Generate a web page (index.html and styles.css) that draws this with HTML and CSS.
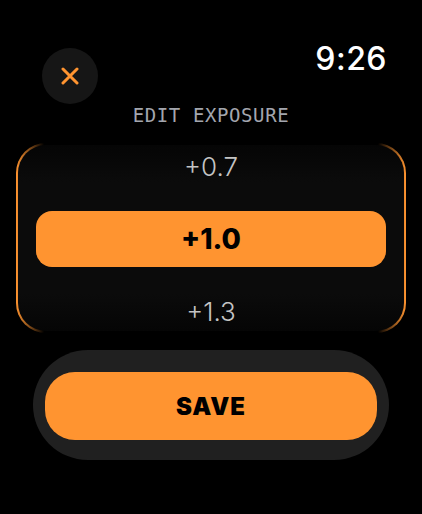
FILE: index.html
```html
<!DOCTYPE html>
<html lang="en">
<head>
  <meta charset="UTF-8" />
  <meta name="viewport" content="width=device-width, initial-scale=1.0" />
  <title>Edit Exposure</title>
  <link rel="stylesheet" href="styles.css">
</head>
<body>
  <div class="screen">
    <div class="top-bar">
      <button class="close-btn" aria-label="Close">
        <svg width="18" height="18" viewBox="0 0 18 18">
          <path d="M2 2 L16 16 M16 2 L2 16" stroke="#ff9430" stroke-width="3" stroke-linecap="round" fill="none" />
        </svg>
      </button>
      <div class="clock">9:26</div>
    </div>

    <div class="title">EDIT EXPOSURE</div>

    <div class="picker">
      <div class="picker-row">+0.7</div>
      <div class="picker-row selected">+1.0</div>
      <div class="picker-row">+1.3</div>
    </div>

    <div class="save-wrap">
      <button class="save-btn">SAVE</button>
    </div>
  </div>
</body>
</html>
```

FILE: styles.css
```css
body {
  margin: 0;
  background-color: #000;
  font-family: Inter, "Noto Sans", sans-serif;
  color: #fff;
}

.screen {
  width: 422px;
  height: 514px;
  box-sizing: border-box;
  padding: 38px 0 0;
}

.top-bar {
  display: flex;
  justify-content: space-between;
  align-items: flex-start;
  padding: 0 35px 0 42px;
}

.close-btn {
  width: 56px;
  height: 56px;
  margin-top: 10px;
  border: none;
  border-radius: 50%;
  background: #161616;
  display: flex;
  align-items: center;
  justify-content: center;
  padding: 0;
}

.clock {
  margin-top: 2px;
  font-size: 32px;
  font-weight: 500;
  line-height: 38px;
  letter-spacing: 0.5px;
}

.title {
  margin-top: -1px;
  text-align: center;
  font-family: "DejaVu Sans Mono", monospace;
  font-size: 19px;
  line-height: 24px;
  letter-spacing: 0.6px;
  color: #a3a6ae;
}

.picker {
  margin: 16px 16px 0;
  height: 190px;
  box-sizing: border-box;
  padding: 3px 18px 1px;
  border: 2px solid transparent;
  border-radius: 30px;
  background:
    linear-gradient(to bottom, #050505, #0b0b0b 20%, #0b0b0b 80%, #050505) padding-box,
    linear-gradient(to right, #ff9430 0, rgba(255, 148, 48, 0) 28px, rgba(255, 148, 48, 0) calc(100% - 28px), #ff9430 100%) border-box;
  display: flex;
  flex-direction: column;
  gap: 26px;
}

.picker-row {
  height: 37px;
  display: flex;
  align-items: center;
  justify-content: center;
  font-size: 26px;
  font-weight: 300;
  color: #c4c4c4;
}

.picker-row.selected {
  height: 56px;
  border-radius: 16px;
  background: #ff9430;
  color: #000;
  font-size: 28px;
  font-weight: 800;
}

.save-wrap {
  margin: 17px 33px 0;
  padding: 22px 12px 20px;
  border-radius: 55px;
  background: #202020;
}

.save-btn {
  width: 100%;
  height: 68px;
  border: none;
  border-radius: 30px;
  background: #ff9430;
  color: #000;
  font-family: Inter, "Noto Sans", sans-serif;
  font-size: 24px;
  font-weight: 900;
  letter-spacing: 1px;
  padding: 0;
}
```
